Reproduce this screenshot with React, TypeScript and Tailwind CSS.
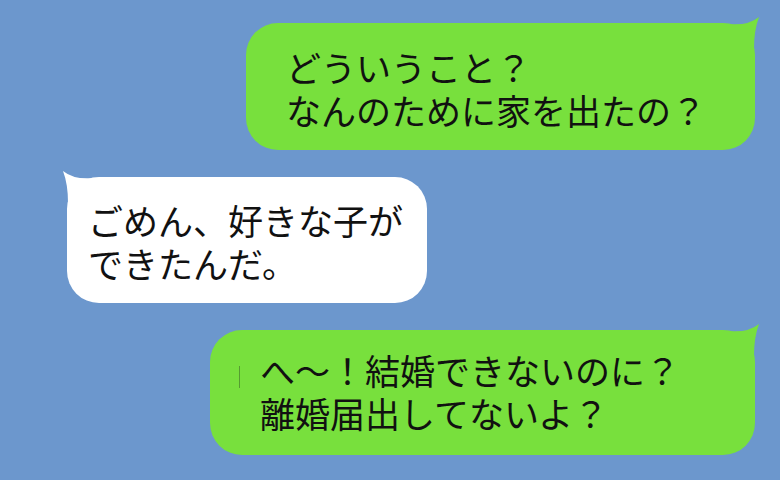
import React from 'react';

type Side = 'left' | 'right';

const Tail: React.FC<{ side: Side; color: string }> = ({ side, color }) => (
  <svg
    width="36"
    height="36"
    viewBox="0 0 36 36"
    className={
      side === 'right'
        ? 'absolute -right-[6px] -top-[8px]'
        : 'absolute -left-[6px] -top-[8px] -scale-x-100'
    }
  >
    <path d="M3 9 Q23 11 34 2 Q29 15 29 34 L3 34 Z" fill={color} />
  </svg>
);

interface BubbleProps {
  side: Side;
  lines: string[];
  className: string;
  color: string;
  children?: React.ReactNode;
}

const Bubble: React.FC<BubbleProps> = ({ side, lines, className, color, children }) => (
  <div className={`relative flex flex-col justify-center rounded-[32px] ${className}`}>
    <Tail side={side} color={color} />
    {children}
    <p className="relative text-[35px] leading-[43px] text-[#111] whitespace-nowrap">
      {lines[0]}
      <br />
      {lines[1]}
    </p>
  </div>
);

export default function App() {
  const green = '#78e03d';
  return (
    <div
      className="w-[780px] h-[480px] overflow-hidden bg-[#6c97cd] flex flex-col"
      style={{ fontFamily: '"Noto Sans CJK JP", "Noto Sans", sans-serif' }}
    >
      <Bubble
        side="right"
        color={green}
        className="self-end mr-[25px] mt-[23px] w-[509px] h-[127px] bg-[#78e03d] pl-[40px] pt-[3px]"
        lines={['どういうこと？', 'なんのために家を出たの？']}
      />
      <Bubble
        side="left"
        color="#ffffff"
        className="self-start ml-[67px] mt-[27px] w-[360px] h-[126px] bg-white pl-[21px] pt-[1px]"
        lines={['ごめん、好きな子が', 'できたんだ。']}
      />
      <Bubble
        side="right"
        color={green}
        className="self-end mr-[25px] mt-[27px] w-[545px] h-[125px] bg-[#78e03d] pl-[50px] pb-[3px]"
        lines={['へ～！結婚できないのに？', '離婚届出してないよ？']}
      >
        <span className="absolute left-[29px] top-[36px] w-[1px] h-[22px] bg-[#3f6e2a] opacity-60" />
      </Bubble>
    </div>
  );
}
